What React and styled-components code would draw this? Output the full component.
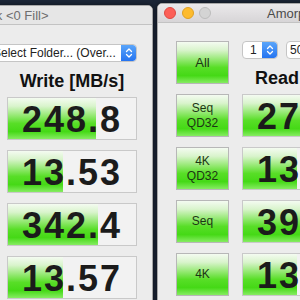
import React from "react";
import styled, { createGlobalStyle } from "styled-components";

const GlobalStyle = createGlobalStyle`
  html, body { margin: 0; padding: 0; background: #1c2637; }
  body { font-family: "Liberation Sans", Arial, sans-serif; }
`;

const green = `linear-gradient(to bottom, #f4fbf1 0%, #d9f4cc 20%, #97e976 42%, #58de27 62%, #45d916 82%, #86ec62 100%)`;

const Desktop = styled.div`
  position: relative;
  width: 300px;
  height: 300px;
  overflow: hidden;
  background: #1c2637;
`;

const Window = styled.div`
  position: absolute;
  left: ${(p) => p.$x}px;
  top: ${(p) => p.$y}px;
  width: 374px;
  height: 340px;
  box-sizing: border-box;
  background: #ececec;
  border: 1px solid #a8a8a8;
  border-radius: 5px 5px 0 0;
  box-shadow: 0 0 5px rgba(0, 0, 0, 0.55);
  overflow: hidden;
`;

const TitleBar = styled.div`
  height: 18px;
  display: flex;
  align-items: center;
  padding-left: 6px;
  background: ${(p) =>
    p.$active ? "linear-gradient(to bottom, #ebe9eb, #d7d5d7)" : "#e6e6e6"};
  border-bottom: 1px solid #c3c3c3;
`;

const Lights = styled.div`
  display: flex;
  gap: 5.5px;
`;

const Light = styled.span`
  width: 12px;
  height: 12px;
  box-sizing: border-box;
  border-radius: 50%;
  background: ${(p) => p.$c};
  border: 0.5px solid ${(p) => p.$b};
`;

const Title = styled.span`
  margin-left: ${(p) => p.$offset}px;
  font-size: 13px;
  color: ${(p) => (p.$active ? "#4b4b4b" : "#6e6e6e")};
  white-space: nowrap;
`;

const Content = styled.div`
  padding: ${(p) => p.$padTop}px 15px 0 18px;
  display: flex;
  flex-direction: column;
  gap: 10px;
`;

const TopRow = styled.div`
  display: grid;
  grid-template-columns: 53px 273px;
  column-gap: 13px;
`;

const GreenButton = styled.div`
  height: 43px;
  box-sizing: border-box;
  border: 1px solid #b7b7b7;
  background: ${green};
  display: flex;
  align-items: center;
  justify-content: center;
  text-align: center;
  font-size: ${(p) => (p.$big ? 13 : 12)}px;
  line-height: 15px;
  color: #1c3614;
  white-space: pre-line;
`;

const TopRight = styled.div`
  display: flex;
  flex-direction: column;
`;

const Controls = styled.div`
  display: flex;
  gap: 8px;
  height: 18px;
`;

const Popup = styled.div`
  ${(p) => (p.$w ? `width: ${p.$w}px;` : "flex: 1; min-width: 0;")}
  height: 18px;
  box-sizing: border-box;
  display: flex;
  background: #fff;
  border: 1px solid #c5c5c5;
  border-radius: 4px;
  overflow: hidden;
`;

const PopupText = styled.span`
  flex: 1;
  min-width: 0;
  padding-left: ${(p) => p.$pad ?? 7}px;
  font-size: 12px;
  line-height: 16px;
  color: #222;
  white-space: nowrap;
  overflow: hidden;
`;

const Arrows = styled.span`
  width: 15px;
  flex: none;
  display: flex;
  align-items: center;
  justify-content: center;
  background: linear-gradient(to bottom, #5aa5fa, #2574f1);
  border-radius: 0 3px 3px 0;
`;

const HeaderRow = styled.div`
  display: grid;
  grid-template-columns: 130px 130px;
  column-gap: 13px;
  height: 25px;
`;

const Header = styled.div`
  padding-top: 9px;
  font-size: 18px;
  font-weight: bold;
  line-height: 20px;
  text-align: center;
  color: #111;
  white-space: nowrap;
`;

const Row = styled.div`
  display: grid;
  grid-template-columns: 53px 130px 130px;
  column-gap: 13px;
  height: 43px;
`;

const ValueBox = styled.div`
  height: 43px;
  box-sizing: border-box;
  border: 1px solid #c9c9c9;
  background: linear-gradient(to right, transparent ${(p) => p.$pct}%, #f2f2f2 ${(p) => p.$pct}%), ${green};
  font-size: 36px;
  font-weight: bold;
  letter-spacing: 2px;
  line-height: 43px;
  text-align: center;
  color: #1b1b1b;
  overflow: hidden;
  white-space: nowrap;
`;

const Chevrons = () => (
  <svg width="8" height="12" viewBox="0 0 8 12">
    <path d="M1.5 4.5 L4 2 L6.5 4.5" fill="none" stroke="#fff" strokeWidth="1.3" strokeLinecap="round" strokeLinejoin="round" />
    <path d="M1.5 7.5 L4 10 L6.5 7.5" fill="none" stroke="#fff" strokeWidth="1.3" strokeLinecap="round" strokeLinejoin="round" />
  </svg>
);

const labels = ["Seq\nQD32", "4K\nQD32", "Seq", "4K"];

const DiskMark = ({ x, y, padTop, active, title, titleOffset, rows }) => (
  <Window $x={x} $y={y}>
    <TitleBar $active={active}>
      <Lights>
        <Light $c={active ? "#fc5f57" : "#d6d6d6"} $b={active ? "#de4a42" : "#bdbdbd"} />
        <Light $c={active ? "#fdbb2e" : "#d6d6d6"} $b={active ? "#dea024" : "#bdbdbd"} />
        <Light $c="#d4d4d4" $b="#bcbcbc" />
      </Lights>
      <Title $active={active} $offset={titleOffset}>{title}</Title>
    </TitleBar>
    <Content $padTop={padTop}>
      <TopRow>
        <GreenButton $big>All</GreenButton>
        <TopRight>
          <Controls>
            <Popup $w={36}>
              <PopupText>1</PopupText>
              <Arrows><Chevrons /></Arrows>
            </Popup>
            <Popup $w={69}>
              <PopupText $pad={3}>50 MiB</PopupText>
              <Arrows><Chevrons /></Arrows>
            </Popup>
            <Popup>
              <PopupText>Select Folder... (Over...</PopupText>
              <Arrows><Chevrons /></Arrows>
            </Popup>
          </Controls>
          <HeaderRow>
            <Header>Read [MB/s]</Header>
            <Header>Write [MB/s]</Header>
          </HeaderRow>
        </TopRight>
      </TopRow>
      {rows.map((r, i) => (
        <Row key={i}>
          <GreenButton>{labels[i]}</GreenButton>
          <ValueBox $pct={r.rp}>{r.read}</ValueBox>
          <ValueBox $pct={r.wp}>{r.write}</ValueBox>
        </Row>
      ))}
    </Content>
  </Window>
);

const leftRows = [
  { read: "283.1", rp: 69, write: "248.8", wp: 69 },
  { read: "13.71", rp: 43, write: "13.53", wp: 43 },
  { read: "395.6", rp: 72, write: "342.4", wp: 70 },
  { read: "13.48", rp: 42, write: "13.57", wp: 43 },
];

const rightRows = [
  { read: "279.5", rp: 68, write: "251.2", wp: 69 },
  { read: "13.44", rp: 42, write: "13.60", wp: 43 },
  { read: "393.2", rp: 72, write: "340.7", wp: 70 },
  { read: "13.61", rp: 42, write: "13.52", wp: 43 },
];

export default function App() {
  return (
    <>
      <GlobalStyle />
      <Desktop>
        <DiskMark
          x={-221}
          y={5}
          padTop={19}
          active={false}
          title="Disk <0 Fill>"
          titleOffset={144}
          rows={leftRows}
        />
        <DiskMark
          x={157}
          y={3}
          padTop={18}
          active
          title="AmorphousDiskMark"
          titleOffset={56}
          rows={rightRows}
        />
      </Desktop>
    </>
  );
}
